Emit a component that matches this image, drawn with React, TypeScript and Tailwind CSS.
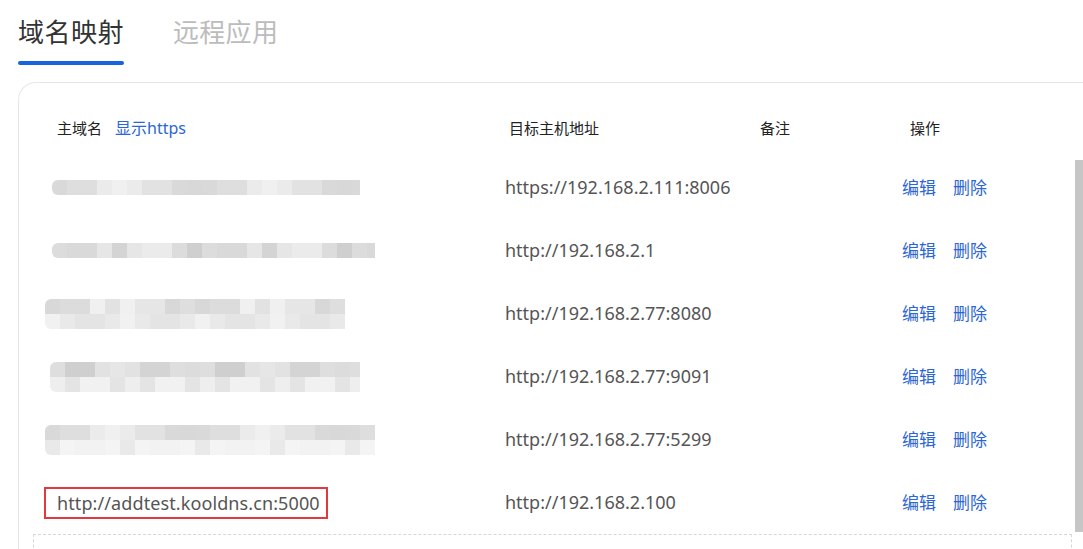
import React from "react";

const font = { fontFamily: '"Noto Sans", "Noto Sans CJK SC", sans-serif' };

type Row = { host: string; blur?: { left: number; width: number; bands: number; seed: number } ; domain?: string };

const rows: Row[] = [
  { host: "https://192.168.2.111:8006", blur: { left: 8, width: 308, bands: 1, seed: 3 } },
  { host: "http://192.168.2.1", blur: { left: 8, width: 323, bands: 1, seed: 7 } },
  { host: "http://192.168.2.77:8080", blur: { left: 1, width: 300, bands: 2, seed: 11 } },
  { host: "http://192.168.2.77:9091", blur: { left: 6, width: 310, bands: 2, seed: 19 } },
  { host: "http://192.168.2.77:5299", blur: { left: 1, width: 330, bands: 2, seed: 23 } },
  { host: "http://192.168.2.100", domain: "http://addtest.kooldns.cn:5000" },
];

const shades = ["#d4d4d4", "#dcdcdc", "#e2e2e2", "#d8d8d8", "#ebebeb", "#cfcfcf", "#e6e6e6", "#dedede", "#f0f0f0", "#d9d9d9"];
const light = ["#ececec", "#f1f1f1", "#e9e9e9", "#f4f4f4", "#eeeeee", "#e4e4e4", "#f2f2f2"];

const Mosaic: React.FC<{ left: number; width: number; bands: number; seed: number }> = ({ left, width, bands, seed }) => {
  const n = Math.ceil(width / 15);
  const band = (palette: string[], s: number) => (
    <div className="flex h-[15px]">
      {Array.from({ length: n }).map((_, i) => (
        <div
          key={i}
          className="h-full shrink-0"
          style={{ width: i === n - 1 ? width - 15 * (n - 1) : 15, background: palette[(i * 7 + s * 3 + (i * i) % 5) % palette.length] }}
        />
      ))}
    </div>
  );
  return (
    <div className="blur-[0.6px] rounded-l-md overflow-hidden" style={{ marginLeft: left, width }}>
      {band(shades, seed)}
      {bands > 1 && band(light, seed + 1)}
    </div>
  );
};

export default function App() {
  return (
    <div className="w-[1083px] h-[549px] overflow-hidden bg-white" style={font}>
      <div className="pl-[18px] flex gap-[49px] pt-[12px]">
        <div className="flex flex-col">
          <span className="text-[26px] leading-[40px] text-[#333] tracking-[0.5px]">域名映射</span>
          <div className="mt-[9px] h-[4px] rounded-full bg-[#1664e0]" />
        </div>
        <span className="text-[26px] leading-[40px] text-[#bcbcbc] tracking-[0.3px]">远程应用</span>
      </div>

      <div className="ml-[18px] mt-[17px] border-l border-t border-[#e6e6e6] rounded-tl-[18px] h-[600px]">
        <div className="pt-[17px]">
          <div className="flex items-center h-[56px] text-[15px] text-[#222]">
            <div className="w-[486px] pl-[38px] flex items-center gap-[13px]">
              <span>主域名</span>
              <span className="text-[16px] text-[#2b66d4]">显示https</span>
            </div>
            <div className="w-[255px] pl-[4px]">目标主机地址</div>
            <div className="w-[150px]">备注</div>
            <div>操作</div>
          </div>
          <div className="flex">
            <div className="flex-1">
              {rows.map((r, i) => (
                <div key={i} className="flex items-center h-[63px]">
                  <div className="w-[486px] pl-[25px]">
                    {r.blur ? (
                      <Mosaic {...r.blur} />
                    ) : (
                      <span className="inline-block border-2 border-[#e03a3e] pl-[11px] pr-[6px] py-[1px] text-[18px] leading-[26px] text-[#555] tracking-[0.1px]">
                        {r.domain}
                      </span>
                    )}
                  </div>
                  <div className="w-[397px] text-[18px] text-[#555]">{r.host}</div>
                  <div className="flex gap-[17px] text-[17px] text-[#2b66d4]">
                    <span>编辑</span>
                    <span>删除</span>
                  </div>
                </div>
              ))}
              <div className="ml-[14px] mr-[3px] h-[40px] border border-dashed border-[#d6d6d6]" />
            </div>
            <div className="w-[8px] pt-[4px]">
              <div className="h-[372px] bg-[#c6c6c6]" />
            </div>
          </div>
        </div>
      </div>
    </div>
  );
}
